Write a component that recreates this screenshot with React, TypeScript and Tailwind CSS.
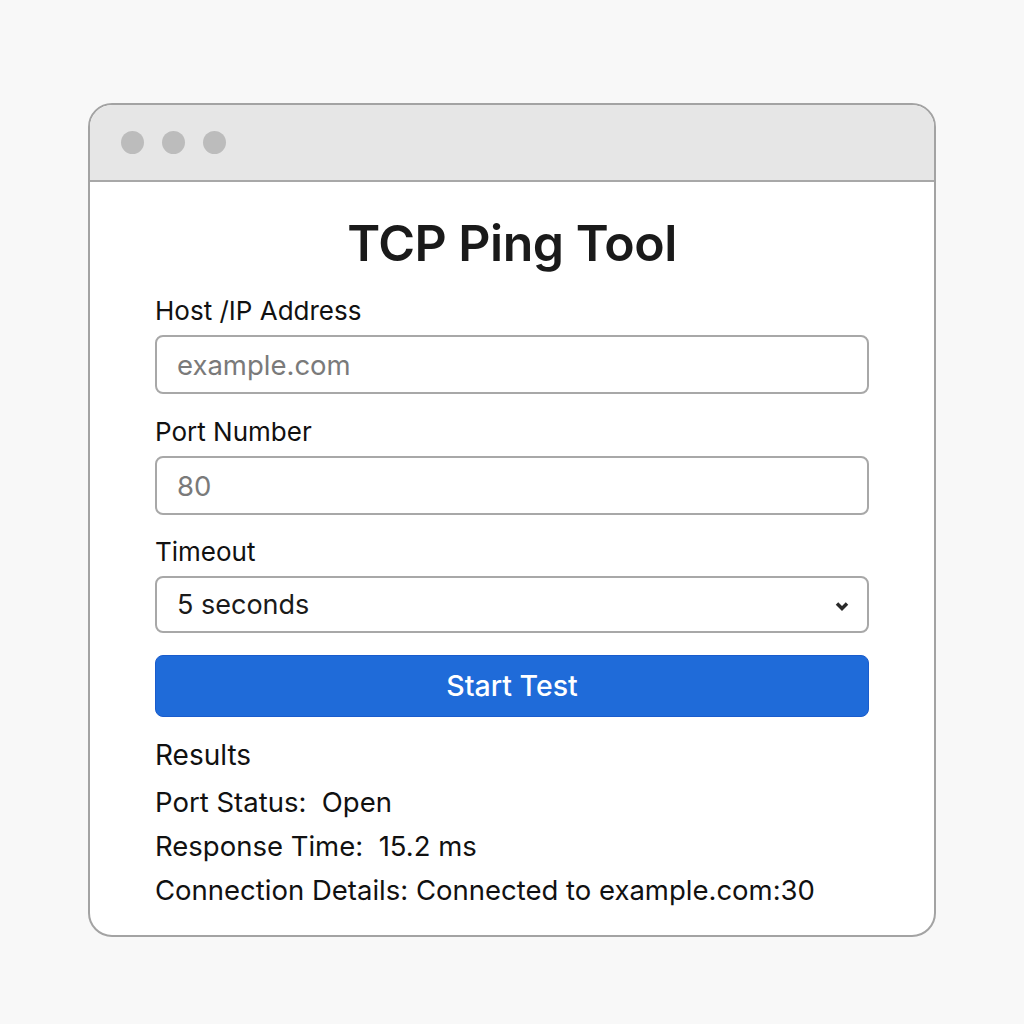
import React from "react";

const font = { fontFamily: "Inter, 'Noto Sans', sans-serif" };

function Field({ label, children, className = "" }: { label: string; children: React.ReactNode; className?: string }) {
  return (
    <div className={className}>
      <div className="text-[26px] leading-[30px] font-normal text-[#111]">{label}</div>
      <div className="mt-[9px]">{children}</div>
    </div>
  );
}

export default function App() {
  return (
    <div className="w-[1024px] h-[1024px] bg-[#f8f8f8] relative" style={font}>
      <div className="absolute left-[88px] top-[103px] w-[848px] h-[834px] border-2 border-[#a3a3a3] rounded-[24px] bg-white overflow-hidden flex flex-col">
        {/* window chrome */}
        <div className="h-[77px] bg-[#e6e6e6] border-b-2 border-[#a8a8a8] flex items-center gap-[18px] pl-[31px] shrink-0">
          <span className="w-[23px] h-[23px] rounded-full bg-[#bcbcbc]" />
          <span className="w-[23px] h-[23px] rounded-full bg-[#bcbcbc]" />
          <span className="w-[23px] h-[23px] rounded-full bg-[#bcbcbc]" />
        </div>

        <div className="px-[65px] pt-[32px] flex flex-col">
          <h1 className="text-center text-[50px] leading-[58px] font-semibold text-[#1a1a1a] tracking-[-0.5px]">TCP Ping Tool</h1>

          <Field label="Host /IP Address" className="mt-[24px]">
            <div className="h-[59px] border-2 border-[#a8a8a8] rounded-[8px] flex items-center px-[20px] pt-[2px] text-[27.5px] text-[#7a7a7a]">
              example.com
            </div>
          </Field>

          <Field label="Port Number" className="mt-[23px]">
            <div className="h-[59px] border-2 border-[#a8a8a8] rounded-[8px] flex items-center px-[20px] pt-[2px] text-[27.5px] text-[#7a7a7a]">
              80
            </div>
          </Field>

          <Field label="Timeout" className="mt-[22px]">
            <div className="h-[57px] border-2 border-[#a8a8a8] rounded-[8px] flex items-center justify-between pl-[20px] pr-[18px] pt-[2px] text-[27px] text-[#1a1a1a]">
              <span>5 seconds</span>
              <svg width="14" height="10" viewBox="0 0 14 10">
                <path d="M2 2.5 L7 7.5 L12 2.5" fill="none" stroke="#2a2a2a" strokeWidth="3.5" />
              </svg>
            </div>
          </Field>

          <button className="mt-[22px] h-[62px] rounded-[8px] bg-[#1f6bd9] border border-[#1a5ccc] text-white text-[28.5px] font-medium">
            Start Test
          </button>

          <div className="mt-[22px] text-[28px] leading-[32px] font-normal text-[#111]">Results</div>
          <div className="mt-[9px] text-[27.5px] leading-[44px] text-[#111]">
            <div>Port Status:&nbsp; Open</div>
            <div>Response Time:&nbsp; 15.2 ms</div>
            <div>Connection Details: Connected to example.com:30</div>
          </div>
        </div>
      </div>
    </div>
  );
}
